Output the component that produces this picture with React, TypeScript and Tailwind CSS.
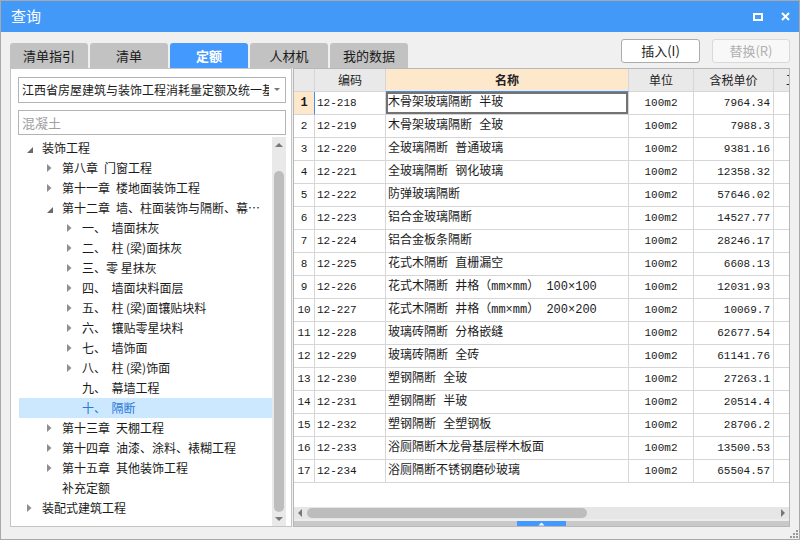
import React from "react";

type TreeItem = {
  label: string;
  level: 0 | 1 | 2;
  arrow?: "open" | "closed";
  selected?: boolean;
};

const tree: TreeItem[] = [
  { label: "装饰工程", level: 0, arrow: "open" },
  { label: "第八章\u2002门窗工程", level: 1, arrow: "closed" },
  { label: "第十一章\u2002楼地面装饰工程", level: 1, arrow: "closed" },
  { label: "第十二章\u2002墙、柱面装饰与隔断、幕…", level: 1, arrow: "open" },
  { label: "一、  墙面抹灰", level: 2, arrow: "closed" },
  { label: "二、  柱 (梁)面抹灰", level: 2, arrow: "closed" },
  { label: "三、零 星抹灰", level: 2, arrow: "closed" },
  { label: "四、  墙面块料面层", level: 2, arrow: "closed" },
  { label: "五、  柱 (梁)面镶贴块料", level: 2, arrow: "closed" },
  { label: "六、  镶贴零星块料", level: 2, arrow: "closed" },
  { label: "七、  墙饰面", level: 2, arrow: "closed" },
  { label: "八、  柱 (梁)饰面", level: 2, arrow: "closed" },
  { label: "九、  幕墙工程", level: 2 },
  { label: "十、  隔断", level: 2, selected: true },
  { label: "第十三章\u2002天棚工程", level: 1, arrow: "closed" },
  { label: "第十四章\u2002油漆、涂料、裱糊工程", level: 1, arrow: "closed" },
  { label: "第十五章\u2002其他装饰工程", level: 1, arrow: "closed" },
  { label: "补充定额", level: 1 },
  { label: "装配式建筑工程", level: 0, arrow: "closed" },
];

const rows: [string, string, string][] = [
  ["12-218", "木骨架玻璃隔断 半玻", "7964.34"],
  ["12-219", "木骨架玻璃隔断 全玻", "7988.3"],
  ["12-220", "全玻璃隔断 普通玻璃", "9381.16"],
  ["12-221", "全玻璃隔断 钢化玻璃", "12358.32"],
  ["12-222", "防弹玻璃隔断", "57646.02"],
  ["12-223", "铝合金玻璃隔断", "14527.77"],
  ["12-224", "铝合金板条隔断", "28246.17"],
  ["12-225", "花式木隔断 直栅漏空", "6608.13"],
  ["12-226", "花式木隔断 井格（mm×mm） 100×100", "12031.93"],
  ["12-227", "花式木隔断 井格（mm×mm） 200×200", "10069.7"],
  ["12-228", "玻璃砖隔断 分格嵌缝", "62677.54"],
  ["12-229", "玻璃砖隔断 全砖", "61141.76"],
  ["12-230", "塑钢隔断 全玻", "27263.1"],
  ["12-231", "塑钢隔断 半玻", "20514.4"],
  ["12-232", "塑钢隔断 全塑钢板", "28706.2"],
  ["12-233", "浴厕隔断木龙骨基层榉木板面", "13500.53"],
  ["12-234", "浴厕隔断不锈钢磨砂玻璃", "65504.57"],
];

const tabs = ["清单指引", "清单", "定额", "人材机", "我的数据"];
const levelPad = ["pl-[8px]", "pl-[28px]", "pl-[48px]"];
const cols = "grid grid-cols-[21px_71px_243px_65px_80px_60px]";
const cell = "h-[23px] border-r border-b border-[#d6d6d6] flex items-center overflow-hidden whitespace-pre";

function TreeArrow({ kind }: { kind?: "open" | "closed" }) {
  if (kind === "closed")
    return (
      <svg width="5" height="8" viewBox="0 0 5 8">
        <path d="M0 0L4.5 4L0 8Z" fill="#8e8e8e" />
      </svg>
    );
  if (kind === "open")
    return (
      <svg width="6" height="6" viewBox="0 0 6 6" className="mt-[3px]">
        <path d="M6 0V6H0Z" fill="#6a6a6a" />
      </svg>
    );
  return null;
}

export default function App() {
  return (
    <div className="w-[800px] h-[540px] flex flex-col border border-[#a9a9a9] bg-[#f0f0f0] font-['Noto_Sans_CJK_SC',sans-serif] text-[#1a1a1a] overflow-hidden">
      {/* title bar */}
      <div className="h-[31px] shrink-0 bg-[#4399f8] flex items-center justify-between pl-[10px] pr-[9px]">
        <span className="text-[15px] text-white">查询</span>
        <div className="flex items-center gap-[18px]">
          <svg width="10" height="8" viewBox="0 0 10 8">
            <rect x="1" y="1" width="8" height="6" fill="none" stroke="white" strokeWidth="2" />
          </svg>
          <svg width="9" height="9" viewBox="0 0 9 9">
            <path d="M1 1L8 8M8 1L1 8" stroke="white" strokeWidth="2" />
          </svg>
        </div>
      </div>

      <div className="flex-1 flex flex-col px-[9px]">
        {/* tabs + buttons */}
        <div className="h-[36px] shrink-0 flex justify-between">
          <div className="self-end flex gap-[2px]">
            {tabs.map((t) => (
              <div
                key={t}
                className={
                  t === "定额"
                    ? "w-[78px] h-[25px] rounded-t-[3px] bg-[#4499ff] text-white font-bold text-[13px] flex items-center justify-center"
                    : "w-[78px] h-[25px] rounded-t-[3px] bg-[#c2c2c2] text-[#1a1a1a] text-[13px] flex items-center justify-center"
                }
              >
                {t}
              </div>
            ))}
          </div>
          <div className="flex gap-[12px] pt-[7px]">
            <button className="w-[79px] h-[24px] bg-white border border-[#acacac] rounded-[3px] text-[13px] text-[#1a1a1a]">
              插入(I)
            </button>
            <button
              disabled
              className="w-[78px] h-[24px] bg-[#f8f8f8] border border-[#d9d9d9] rounded-[3px] text-[13px] text-[#b0b0b0]"
            >
              替换(R)
            </button>
          </div>
        </div>

        {/* main area */}
        <div className="h-[459px] shrink-0 flex gap-[1px]">
          {/* left panel */}
          <div className="w-[282px] border border-[#c4c4c4] bg-white flex flex-col pl-[7px] pr-[5px]">
            <div className="mt-[8px] h-[26px] shrink-0 border border-[#b4b4b4] flex items-center overflow-hidden">
              <span className="flex-1 pl-[3px] text-[12px] whitespace-nowrap overflow-hidden">
                江西省房屋建筑与装饰工程消耗量定额及统一基
              </span>
              <svg width="16" height="6" viewBox="0 0 16 6" className="shrink-0">
                <path d="M5 1H11L8 4Z" fill="#777" />
              </svg>
            </div>
            <div className="mt-[7px] h-[25px] shrink-0 border border-[#b4b4b4] flex items-center pl-[3px] text-[13px] text-[#a0a0a0]">
              混凝土
            </div>
            <div className="mt-[2px] flex-1 flex min-h-0">
              <div className="flex-1 pl-[1px] pt-[1px] text-[12px]">
                {tree.map((n, i) => (
                  <div
                    key={i}
                    className={`h-[20px] flex items-center ${levelPad[n.level]} ${
                      n.selected ? "bg-[#cce8ff] text-[#2a78d8]" : ""
                    }`}
                  >
                    <span className="w-[15px] shrink-0 flex items-center">
                      <TreeArrow kind={n.arrow} />
                    </span>
                    <span className="whitespace-pre">{n.label}</span>
                  </div>
                ))}
              </div>
              <div className="w-[14px] bg-[#e9e9e9] flex flex-col items-center">
                <svg width="10" height="14" viewBox="0 0 10 14" className="mt-[3px]">
                  <path d="M1 7H9L5 3Z" fill="#777" />
                </svg>
                <div className="mt-[17px] w-[10px] h-[341px] rounded-full bg-[#bdbdbd]" />
                <svg width="10" height="8" viewBox="0 0 10 8" className="mt-[3px]">
                  <path d="M1 2H9L5 6Z" fill="#777" />
                </svg>
              </div>
            </div>
          </div>

          {/* grid */}
          <div className="w-[497px] border border-[#b8b8b8] bg-white flex flex-col overflow-hidden">
            <div className="overflow-hidden">
              <div className={`${cols} bg-[#e9e9e9] text-[12px] text-[#222]`}>
                <div className={cell} />
                <div className={`${cell} justify-center`}>编码</div>
                <div className={`${cell} justify-center bg-[#fde8cb] font-bold border-b-[#3f8ef5]`}>名称</div>
                <div className={`${cell} justify-center`}>单位</div>
                <div className={`${cell} justify-center`}>含税单价</div>
                <div className={`${cell} pl-[12px]`}>工程量</div>
              </div>
              {rows.map(([code, name, price], i) => (
                <div key={code} className={`${cols} font-['Liberation_Mono','Noto_Sans_CJK_SC',monospace]`}>
                  <div
                    className={
                      i === 0
                        ? `${cell} justify-center bg-[#fde8cb] font-bold text-[12px] border-r-[#3f8ef5]`
                        : `${cell} justify-center text-[11px]`
                    }
                  >
                    {i + 1}
                  </div>
                  <div className={`${cell} pl-[2px] text-[11px]`}>{code}</div>
                  <div
                    className={
                      i === 0
                        ? `${cell} pl-[2px] text-[12px] shadow-[inset_0_0_0_2px_#737373]`
                        : `${cell} pl-[2px] text-[12px]`
                    }
                  >
                    {name}
                  </div>
                  <div className={`${cell} justify-center text-[11px]`}>100m2</div>
                  <div className={`${cell} justify-end pr-[3px] text-[11px]`}>{price}</div>
                  <div className={cell} />
                </div>
              ))}
            </div>
            <div className="flex-1" />
            {/* horizontal scrollbar */}
            <div className="h-[12px] shrink-0 bg-[#e6e6e6] flex items-center">
              <svg width="12" height="12" viewBox="0 0 12 12" className="shrink-0">
                <path d="M8 2V10L4 6Z" fill="#777" />
              </svg>
              <div className="ml-[1px] w-[280px] h-[10px] rounded-full bg-[#bdbdbd]" />
              <div className="flex-1" />
              <svg width="12" height="12" viewBox="0 0 12 12" className="shrink-0">
                <path d="M4 2V10L8 6Z" fill="#777" />
              </svg>
            </div>
            <div className="h-[2px] shrink-0 bg-[#ededed]" />
            <div className="h-[5px] shrink-0 bg-[#c9c9c9] flex justify-center">
              <div className="w-[49px] h-full bg-[#4499ff] flex items-center justify-center">
                <svg width="7" height="4" viewBox="0 0 7 4">
                  <path d="M0.5 3.5H6.5L3.5 0.5Z" fill="white" />
                </svg>
              </div>
            </div>
          </div>
        </div>

        {/* bottom strip with resize grip */}
        <div className="flex-1 flex justify-end items-end">
          <svg width="9" height="9" viewBox="0 0 9 9" className="mr-[-8px] mb-[1px]">
            <g fill="#9a9a9a">
              <rect x="7" y="1" width="2" height="2" />
              <rect x="4" y="4" width="2" height="2" />
              <rect x="7" y="4" width="2" height="2" />
              <rect x="1" y="7" width="2" height="2" />
              <rect x="4" y="7" width="2" height="2" />
              <rect x="7" y="7" width="2" height="2" />
            </g>
          </svg>
        </div>
      </div>
    </div>
  );
}
